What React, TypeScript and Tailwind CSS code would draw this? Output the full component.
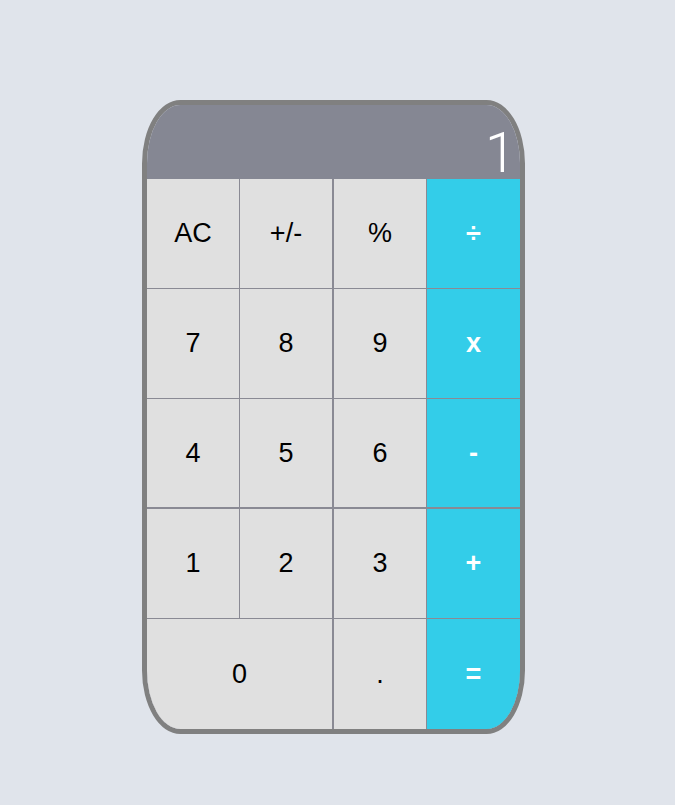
import React, { useState } from 'react'

type Key = {
  label: string
  kind: 'num' | 'op'
  cls?: string
}

const keys: Key[] = [
  { label: 'AC', kind: 'num' },
  { label: '+/-', kind: 'num', cls: 'border-r border-[#8a8a94]' },
  { label: '%', kind: 'num' },
  { label: '÷', kind: 'op' },
  { label: '7', kind: 'num' },
  { label: '8', kind: 'num', cls: 'border-r border-[#8a8a94]' },
  { label: '9', kind: 'num' },
  { label: 'x', kind: 'op' },
  { label: '4', kind: 'num', cls: 'border-b border-[#8a8a94]' },
  { label: '5', kind: 'num', cls: 'border-r border-b border-[#8a8a94]' },
  { label: '6', kind: 'num', cls: 'border-b border-[#8a8a94]' },
  { label: '-', kind: 'op', cls: 'border-b border-[#8a8a94]' },
  { label: '1', kind: 'num' },
  { label: '2', kind: 'num', cls: 'border-r border-[#8a8a94]' },
  { label: '3', kind: 'num' },
  { label: '+', kind: 'op' },
  { label: '0', kind: 'num', cls: 'col-span-2 border-r border-[#8a8a94]' },
  { label: '.', kind: 'num' },
  { label: '=', kind: 'op' },
]

export default function App() {
  const [display, setDisplay] = useState('1')

  const press = (k: string) => {
    if (k === 'AC') setDisplay('0')
    else if (/[0-9]/.test(k)) setDisplay(display === '0' ? k : display + k)
  }

  return (
    <div className="min-h-[805px] bg-[#e0e4eb] pt-[100px] pl-[142px]">
      <div className="w-[383px] h-[634px] border-[5px] border-[#808080] rounded-[10%] overflow-hidden flex flex-col">
        {/* Display */}
        <div className="h-[74px] bg-[#858793] flex items-center justify-end pr-[4px] pt-[22px]">
          <span className="text-white text-[56px] leading-none font-light font-['Roboto',sans-serif]">
            {display}
          </span>
        </div>

        {/* Keys */}
        <div className="flex-1 grid grid-cols-[92px_93px_92px_93px] grid-rows-[109px_109px_109px_109px_110px] gap-px bg-[#8a8a94]">
          {keys.map((k) => (
            <button
              key={k.label}
              onClick={() => press(k.label)}
              className={`flex items-center justify-center text-[27px] font-['Liberation_Sans',Arial,sans-serif] ${
                k.kind === 'op' ? 'bg-[#33cde9] text-white font-bold' : 'bg-[#e0e0e0] text-black'
              } ${k.cls ?? ''}`}
            >
              {k.label}
            </button>
          ))}
        </div>
      </div>
    </div>
  )
}
